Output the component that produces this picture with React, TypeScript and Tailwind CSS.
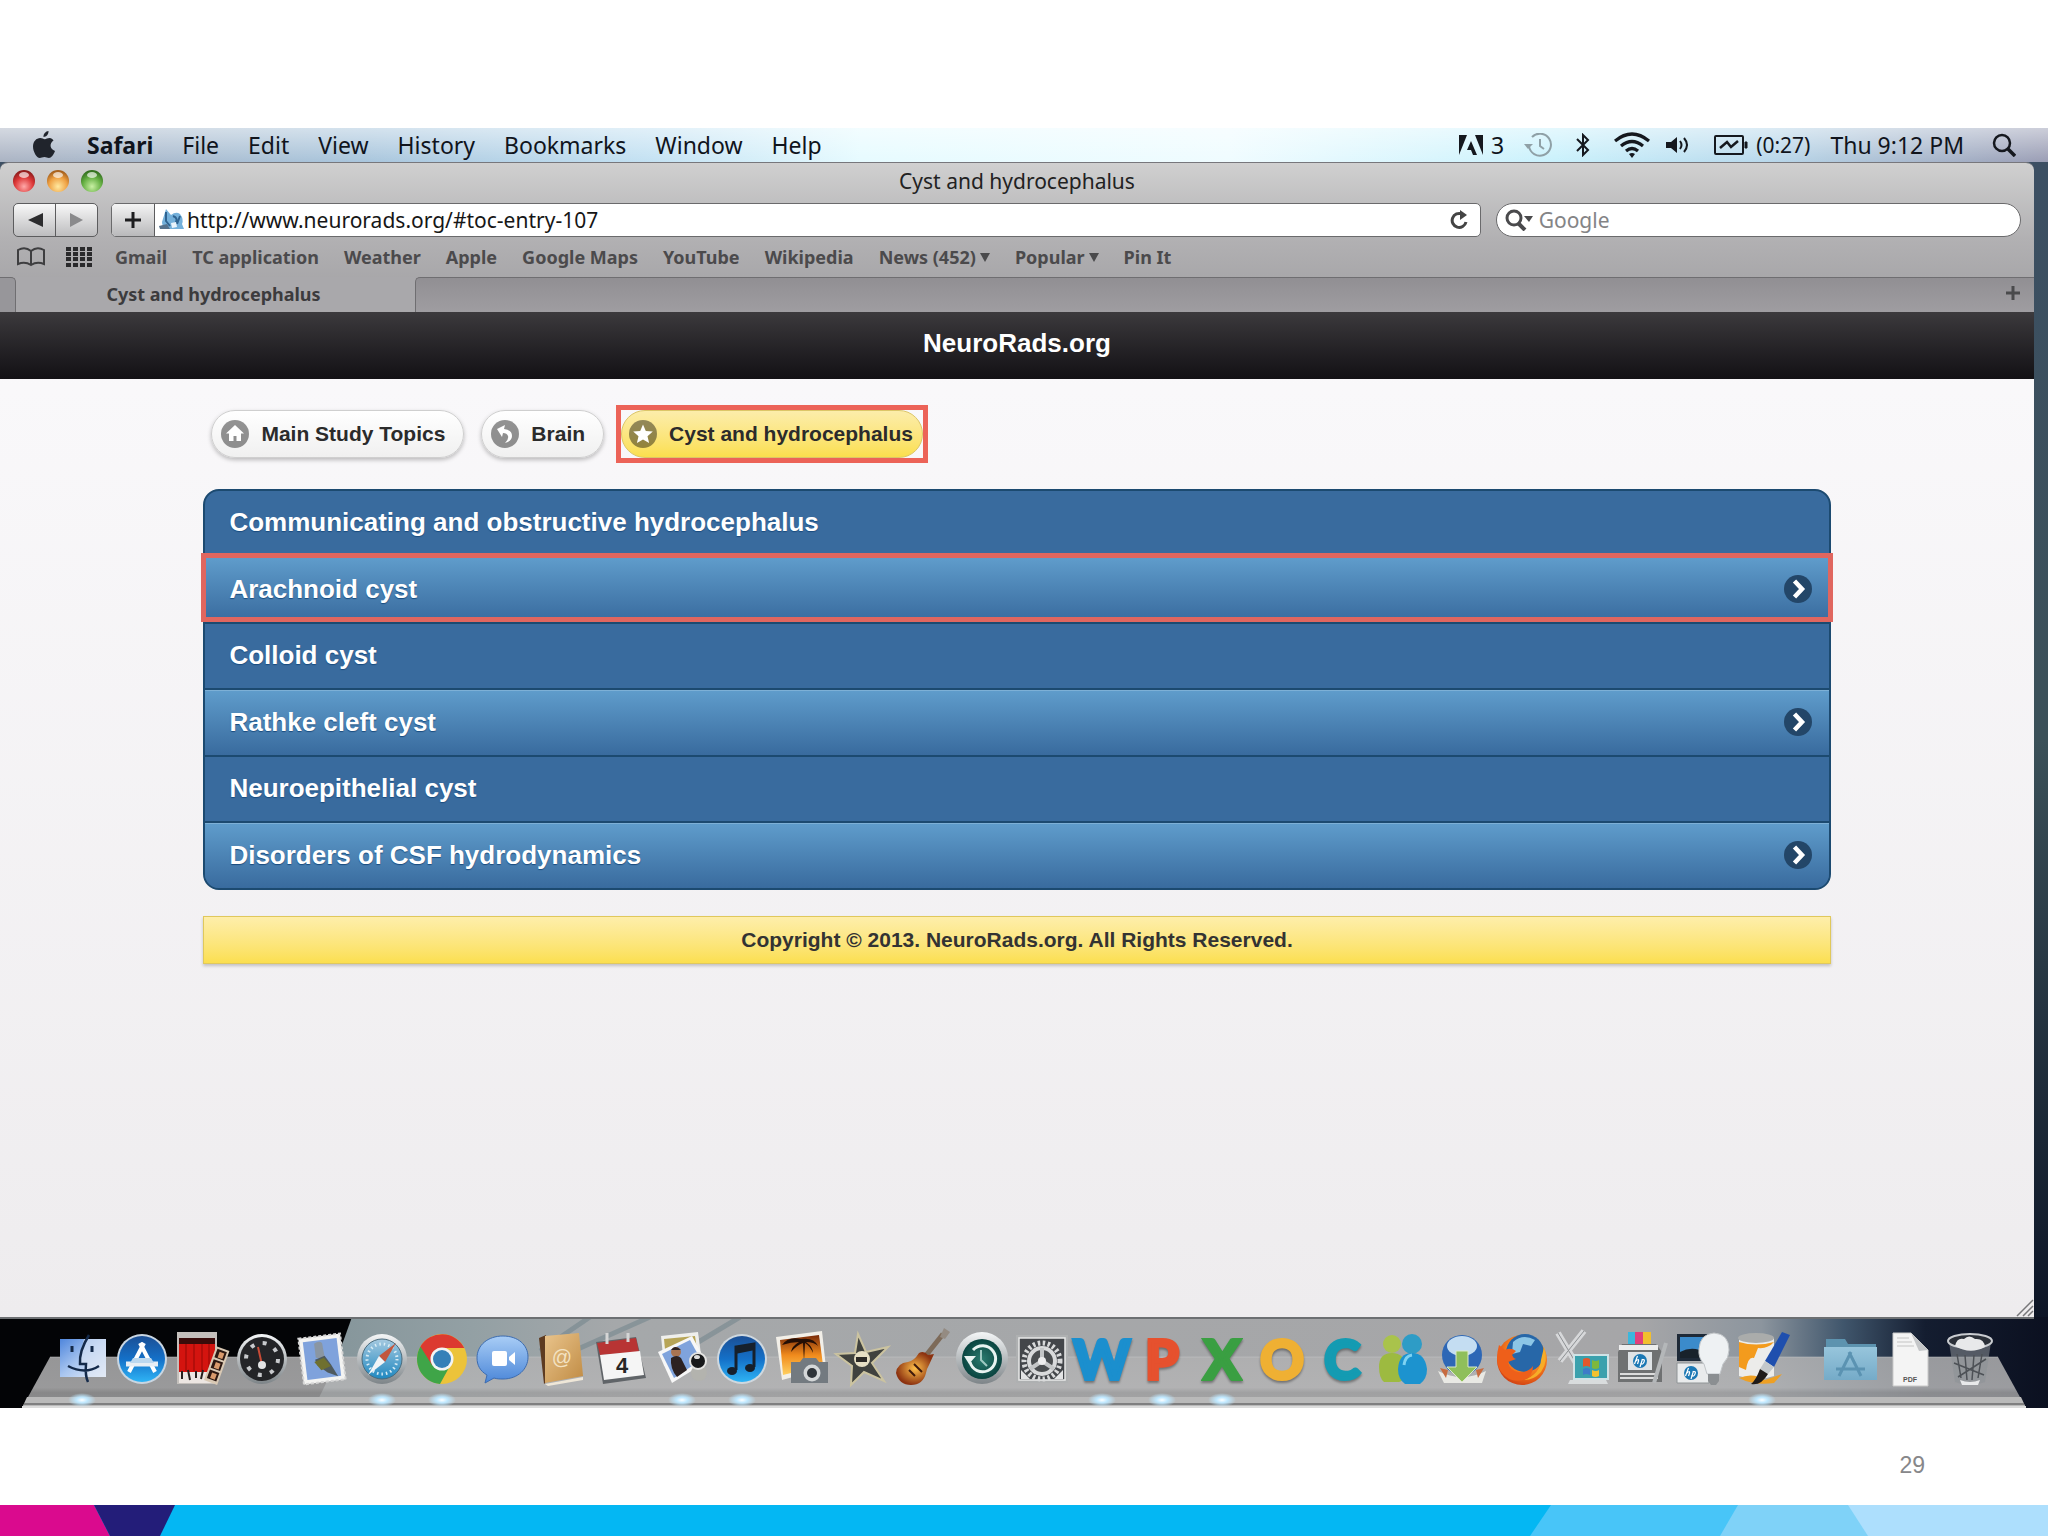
import type { ReactNode } from "react";

type DockItem = {
  name: string;
  running?: boolean;
  letter?: string;
  color?: string;
  art?: ReactNode;
};

const menus = ["File", "Edit", "View", "History", "Bookmarks", "Window", "Help"];

const bookmarks = [
  { label: "Gmail" },
  { label: "TC application" },
  { label: "Weather" },
  { label: "Apple" },
  { label: "Google Maps" },
  { label: "YouTube" },
  { label: "Wikipedia" },
  { label: "News (452)", menu: true },
  { label: "Popular", menu: true },
  { label: "Pin It" },
];

const topics = [
  { title: "Communicating and obstructive hydrocephalus" },
  { title: "Arachnoid cyst", link: true, marked: true },
  { title: "Colloid cyst" },
  { title: "Rathke cleft cyst", link: true },
  { title: "Neuroepithelial cyst" },
  { title: "Disorders of CSF hydrodynamics", link: true },
];

//Shared gradients
function Gradients() {
  return (
    <svg className="absolute h-0 w-0" aria-hidden="true">
      <defs>
        <linearGradient id="gFinder" x1="0" y1="0" x2="1" y2="1">
          <stop offset="0" stopColor="#4f86dc" />
          <stop offset=".5" stopColor="#a9c6f0" />
          <stop offset="1" stopColor="#e9eef6" />
        </linearGradient>
        <linearGradient id="gBlue" x1="0" y1="0" x2="0" y2="1">
          <stop offset="0" stopColor="#1b4f95" />
          <stop offset=".5" stopColor="#1470c8" />
          <stop offset="1" stopColor="#2fb4f5" />
        </linearGradient>
        <linearGradient id="gSilver" x1="0" y1="0" x2="0" y2="1">
          <stop offset="0" stopColor="#f4f6f7" />
          <stop offset="1" stopColor="#7d8488" />
        </linearGradient>
        <linearGradient id="gSky" x1="0" y1="0" x2="0" y2="1">
          <stop offset="0" stopColor="#a5c9e0" />
          <stop offset="1" stopColor="#1f88c0" />
        </linearGradient>
        <linearGradient id="gChat" x1="0" y1="0" x2="0" y2="1">
          <stop offset="0" stopColor="#a9cdf6" />
          <stop offset="1" stopColor="#4a86d8" />
        </linearGradient>
        <linearGradient id="gBook" x1="0" y1="0" x2="1" y2="1">
          <stop offset="0" stopColor="#e9c48c" />
          <stop offset="1" stopColor="#c08b43" />
        </linearGradient>
        <linearGradient id="gSunset" x1="0" y1="0" x2="0" y2="1">
          <stop offset="0" stopColor="#7a2a08" />
          <stop offset=".5" stopColor="#f08a1c" />
          <stop offset="1" stopColor="#ffd060" />
        </linearGradient>
        <radialGradient id="gGuitar">
          <stop offset="0" stopColor="#ffc04a" />
          <stop offset="1" stopColor="#8c3210" />
        </radialGradient>
        <radialGradient id="gTeal">
          <stop offset="0" stopColor="#2a7a6e" />
          <stop offset="1" stopColor="#0a4440" />
        </radialGradient>
        <linearGradient id="gFolder" x1="0" y1="0" x2="0" y2="1">
          <stop offset="0" stopColor="#97c5dc" />
          <stop offset="1" stopColor="#75abc8" />
        </linearGradient>
        <radialGradient id="gFox" cx=".6" cy=".35" r=".7">
          <stop offset="0" stopColor="#ffc93a" />
          <stop offset=".6" stopColor="#f47a1c" />
          <stop offset="1" stopColor="#cf3d12" />
        </radialGradient>
        <radialGradient id="gRed" cx=".5" cy=".75" r=".7">
          <stop offset="0" stopColor="#ffa9a9" />
          <stop offset=".6" stopColor="#dd3838" />
          <stop offset="1" stopColor="#8f1c1c" />
        </radialGradient>
        <radialGradient id="gAmber" cx=".5" cy=".75" r=".7">
          <stop offset="0" stopColor="#ffe9a0" />
          <stop offset=".6" stopColor="#efa143" />
          <stop offset="1" stopColor="#a7601c" />
        </radialGradient>
        <radialGradient id="gGreen" cx=".5" cy=".75" r=".7">
          <stop offset="0" stopColor="#c9f0a4" />
          <stop offset=".6" stopColor="#66b044" />
          <stop offset="1" stopColor="#33701f" />
        </radialGradient>
        <radialGradient id="gLamp">
          <stop offset="0" stopColor="#ffffff" />
          <stop offset=".4" stopColor="#bfe8ff" />
          <stop offset="1" stopColor="#bfe8ff" stopOpacity="0" />
        </radialGradient>
      </defs>
    </svg>
  );
}

const hp = (
  <>
    <circle r="7" fill="#1b78b4" />
    <path d="M-2.500 -5l-3 8M-4 0q3-3 2.500 0l-1 3M2.500 -2l-2.500 8M1.500 -1q4-1.500 2.500 2t-3.500 1" stroke="#fff" strokeWidth="1.200" fill="none" />
  </>
);

const dockItems: DockItem[] = [
  {
    name: "Finder",
    running: true,
    art: (
      <>
        <rect x="4" y="6" width="46" height="38" fill="url(#gFinder)" />
        <path d="M28 6h22v38H30l-1-13h-5q1-14 4-25z" fill="#dfe8f5" opacity=".6" />
        <path d="M33 2Q23 18 24 31h6q-1 12 2 18M12 33q17 9 31 0" fill="none" stroke="#142a4a" strokeWidth="2.500" />
        <path d="M16 13v6M36 13v6" stroke="#142a4a" strokeWidth="3" />
      </>
    ),
  },
  {
    name: "App Store",
    art: (
      <>
        <circle cx="26" cy="26" r="25" fill="#c9d6e2" />
        <circle cx="26" cy="26" r="23" fill="url(#gBlue)" />
        <path d="M28 10L13 39M24 10l15 29" stroke="#fff" strokeWidth="4" />
        <path d="M10 31h32" stroke="#e7eef5" strokeWidth="5" />
        <path d="M17 25h18l3 5H14z" fill="#bcd8ef" />
      </>
    ),
  },
  {
    name: "Photo Booth",
    art: (
      <>
        <path d="M1-1h40v52H1z" fill="#c4c0bc" />
        <path d="M3 5h36v34H3z" fill="#d4140f" />
        <path d="M3 5h36v6H3z" fill="#3a0c0a" />
        <path d="M10 11v27M18 11v27M26 11v27M33 11v27" stroke="#b40e0a" strokeWidth="2" />
        <path d="M3 39h36v11H3z" fill="#ece6e2" />
        <path d="M6 38v8M12 37l2 10M20 38v7M27 37l-2 9" stroke="#26201e" strokeWidth="2" />
        <g transform="rotate(20 42 32)">
          <path d="M34 15h14v36H34z" fill="#d9c9b4" />
          <path d="M36 17h10v9H36zM36 28h10v9H36zM36 39h10v9H36z" fill="#2c1812" />
          <path d="M39 19h5v6h-5zM39 30h5v6h-5zM39 41h5v6h-5z" fill="#d99a6c" />
        </g>
      </>
    ),
  },
  {
    name: "Dashboard",
    art: (
      <>
        <circle cx="26" cy="26" r="25" fill="url(#gSilver)" />
        <circle cx="26" cy="26" r="22" fill="#232427" />
        <circle cx="26" cy="26" r="16" fill="none" stroke="#c7c9cc" strokeWidth="4" strokeDasharray="4 8.600" />
        <path d="M26 32L22 14" stroke="#c84b36" strokeWidth="2" />
        <circle cx="26" cy="32" r="4" fill="#e3e4e5" />
      </>
    ),
  },
  {
    name: "Mail",
    art: (
      <g transform="rotate(-7 26 26)">
        <path d="M5 3h42v46H5z" fill="#f4f4f2" stroke="#d5d5d5" strokeDasharray="3 2" strokeWidth="2" />
        <path d="M9 7h34v38H9z" fill="#7fa2dc" />
        <path d="M20 10q5-3 8 0l1 16-9-2z" fill="#8a96a3" />
        <path d="M19 26l10-3 5 9 6 13-10-5-9-8z" fill="#4f5a5e" />
        <path d="M18 28l10-3 6 9-10 3z" fill="#6f7030" />
      </g>
    ),
  },
  {
    name: "Safari",
    running: true,
    art: (
      <>
        <circle cx="26" cy="26" r="25" fill="url(#gSilver)" />
        <circle cx="26" cy="26" r="20" fill="url(#gSky)" stroke="#4a6b7c" />
        <circle cx="26" cy="26" r="15" fill="none" stroke="#d8ecf5" strokeWidth="3" strokeDasharray="1.500 3" />
        <path d="M40 10L29 29l-6-6z" fill="#c2573e" />
        <path d="M12 42l11-19 6 6z" fill="#f0f4f6" />
      </>
    ),
  },
  {
    name: "Chrome",
    running: true,
    art: (
      <>
        <circle cx="26" cy="26" r="25" fill="#ecc33a" />
        <path d="M26 26L4.400 13.500A25 25 0 0 0 24 51l11-20z" fill="#3fa548" />
        <path d="M26 26V15h22.300A25 25 0 0 0 4.400 13.500L16 32z" fill="#dc3a30" />
        <circle cx="26" cy="26" r="11.500" fill="#f3f4f4" />
        <circle cx="26" cy="26" r="9" fill="#3580b8" />
      </>
    ),
  },
  {
    name: "iChat",
    art: (
      <>
        <path d="M27 3c15 0 25 9 25 21s-10 22-25 22c-3 0-6 0-9-1l-9 5 2-8C4 38 1 32 1 25 1 12 12 3 27 3z" fill="url(#gChat)" stroke="#3d6cb0" />
        <rect x="16" y="18" width="15" height="15" rx="2" fill="#fff" />
        <path d="M33 24l6-5v13l-6-5z" fill="#fff" />
      </>
    ),
  },
  {
    name: "Address Book",
    art: (
      <>
        <path d="M3 5l7-3 4 44-6 5z" fill="#5e3b20" />
        <path d="M9 3l34-3 4 43-38 7z" fill="url(#gBook)" />
        <path d="M9 51l38-7v3L12 53z" fill="#efe7d8" />
        <text x="26" y="31" textAnchor="middle" fontSize="20" fill="#f3e2c2" fontFamily="Liberation Sans">@</text>
      </>
    ),
  },
  {
    name: "iCal",
    art: (
      <>
        <path d="M0 9l40-5 10 41-43 6z" fill="#606468" />
        <path d="M1 10l39-5 3 14-39 3z" fill="#b83434" />
        <path d="M4 22l40-4 4 24-40 5z" fill="#f5f5f5" />
        <path d="M11 0v11M32 0v9" stroke="#d5d5d5" strokeWidth="3" />
        <text x="26" y="40" textAnchor="middle" fontSize="22" fontWeight="700" fill="#262626" fontFamily="Liberation Sans">4</text>
      </>
    ),
  },
  {
    name: "Preview",
    running: true,
    art: (
      <>
        <path d="M5 3l37-4 4 30-38 4z" fill="#efefec" />
        <path d="M8 6l31-3 3 20-32 4z" fill="#b7a557" />
        <path d="M2 19L36 3l14 26-34 21z" fill="#f7f7f7" />
        <path d="M6 21L34 7l11 20-27 18z" fill="#7fa3dc" />
        <circle cx="20" cy="19" r="5" fill="#a87452" />
        <path d="M15 17q4-6 10 0zM15 25q6-4 10 0l6 12-10 7q-7-8-6-19z" fill="#2c2222" />
        <circle cx="43" cy="40" r="8" fill="#b3b3ae" />
        <circle cx="42" cy="28" r="9" fill="#e4e4e2" />
        <circle cx="42" cy="28" r="7" fill="#17181a" />
        <ellipse cx="41" cy="24" rx="3" ry="2" fill="#dcdcdc" />
      </>
    ),
  },
  {
    name: "iTunes",
    running: true,
    art: (
      <>
        <circle cx="26" cy="26" r="25" fill="#cfd8df" />
        <circle cx="26" cy="26" r="23" fill="url(#gBlue)" />
        <path d="M20 37V14l18-3v23" fill="none" stroke="#16202c" strokeWidth="3" />
        <path d="M19 14l20-4v7l-20 4z" fill="#16202c" />
        <ellipse cx="16" cy="38" rx="5" ry="4" fill="#16202c" />
        <ellipse cx="34" cy="35" rx="5" ry="4" fill="#16202c" />
      </>
    ),
  },
  {
    name: "iPhoto",
    art: (
      <>
        <path d="M0 4l46-6 4 37-44 12z" fill="#f2efe8" />
        <path d="M4 7l39-5 4 30-40 10z" fill="url(#gSunset)" />
        <path d="M25 6q-13-3-19 6 9-3 17-3-7 4-8 10 6-7 12-9l1 18 1-18q5 3 8 10 0-6-7-11 8 0 12 4-4-9-17-7z" fill="#240e05" />
        <path d="M15 29h9l3-4h13l3 4h9v21H15z" fill="#737a80" />
        <circle cx="36" cy="40" r="8.500" fill="#d4d7d8" />
        <circle cx="36" cy="40" r="5" fill="#2e3338" />
      </>
    ),
  },
  {
    name: "iMovie",
    art: (
      <>
        <path d="M22 1l8 18 22-5-16 16 12 18-20-9-13 13 1-19L0 21l19-1z" fill="#40423e" stroke="#cbc3a0" strokeWidth="2" />
        <circle cx="26" cy="26" r="8" fill="#e6dfc4" />
        <path d="M20 24h11v5H20z" fill="#2c2a26" />
      </>
    ),
  },
  {
    name: "GarageBand",
    art: (
      <>
        <path d="M24 30L47 1" stroke="#7d6a58" strokeWidth="5" />
        <path d="M44 4l4-9 6 4-5 7z" fill="#948b82" />
        <path d="M23 20q5-3 9 2l6-1-5 11q-2 3-3 8-3 12-15 12T0 40q1-10 12-11 6-1 11-9z" fill="url(#gGuitar)" />
        <path d="M18 31l8 8M13 37l6 6" stroke="#3f1a0b" strokeWidth="2" />
      </>
    ),
  },
  {
    name: "Time Machine",
    art: (
      <>
        <circle cx="26" cy="25" r="26" fill="url(#gSilver)" />
        <circle cx="26" cy="26" r="20" fill="url(#gTeal)" />
        <path d="M14 29a13 13 0 1 0 3-12" fill="none" stroke="#e8f3f1" strokeWidth="3" />
        <path d="M8 23l12 0-7 8z" fill="#e8f3f1" />
        <path d="M25 17v10l6 6" fill="none" stroke="#9fc9c2" strokeWidth="2" />
      </>
    ),
  },
  {
    name: "System Preferences",
    art: (
      <>
        <path d="M0 2h52v48H0z" fill="#aeb0b1" />
        <path d="M3 5h46v42H3z" fill="#43464a" stroke="#e8e8e8" strokeWidth="1.500" />
        <circle cx="26" cy="28" r="18" fill="none" stroke="#d9dadb" strokeWidth="5" strokeDasharray="2.500 2.500" />
        <circle cx="26" cy="28" r="13" fill="#4b4e50" stroke="#d9dadb" strokeWidth="4" />
        <path d="M26 28V15M26 28l-12 8M26 28l12 8" stroke="#c4c6c7" strokeWidth="4" />
        <circle cx="26" cy="28" r="4" fill="#ededed" />
        <path d="M5 37l9 9H5zM47 37l-9 9h9z" fill="#e3e4e5" />
      </>
    ),
  },
  { name: "Word", running: true, letter: "W", color: "text-[#1b8fce] [-webkit-text-stroke:4px_#1b8fce]" },
  { name: "PowerPoint", running: true, letter: "P", color: "text-[#e6512e] [-webkit-text-stroke:4px_#e6512e]" },
  { name: "Excel", running: true, letter: "X", color: "text-[#3a9f42] [-webkit-text-stroke:4px_#3a9f42]" },
  { name: "Outlook", letter: "O", color: "text-[#efb033] [-webkit-text-stroke:4px_#efb033]" },
  { name: "Communicator", letter: "C", color: "text-[#149bb2] [-webkit-text-stroke:4px_#149bb2]" },
  {
    name: "Messenger",
    art: (
      <>
        <circle cx="16" cy="11" r="9" fill="#a9c34b" />
        <path d="M3 34q0-14 13-14t13 14-6 15H8q-5-4-5-15z" fill="#9dba40" />
        <circle cx="36" cy="11" r="10" fill="#2e9cc6" />
        <path d="M22 36q1-16 14-16t15 16q0 10-7 15H29q-7-5-7-15z" fill="#1c93cf" />
        <path d="M28 32q1-9 8-10" stroke="#7fd3f2" strokeWidth="3" fill="none" />
      </>
    ),
  },
  {
    name: "Download Manager",
    art: (
      <>
        <circle cx="26" cy="22" r="20" fill="#2d67b6" />
        <ellipse cx="26" cy="13" rx="15" ry="10" fill="#c4ddf2" />
        <path d="M2 38q24 12 48 0l-4 12H8z" fill="#e9e9e4" />
        <path d="M40 37l8-2-6 10zM12 37l-8-2 6 10z" fill="#c76b3f" />
        <path d="M20 18h12v16h9L26 49 11 34h9z" fill="#8fbf5a" stroke="#dceac8" />
      </>
    ),
  },
  {
    name: "Firefox",
    art: (
      <>
        <circle cx="26" cy="27" r="25" fill="url(#gFox)" />
        <circle cx="29" cy="20" r="19" fill="#2767a8" />
        <path d="M17 9q10-9 22-2l-4 6-8-2-3 8-8 2z" fill="#8cc6e6" />
        <path d="M48 14q5 14-3 25-7 8-17 8 16-6 17-20z" fill="#f6ad28" />
        <path d="M3 12l6 5q6-3 11 1l-4 4q1 3 4 4l-8 3q1 8 10 10 10 1 15-6 0 11-10 14-13 3-21-7T3 12z" fill="#ee5f1a" />
      </>
    ),
  },
  {
    name: "Remote Desktop",
    art: (
      <>
        <path d="M2 0l18 30M28-2L4 28" stroke="#d7d8da" strokeWidth="6" />
        <path d="M2 0l18 30M28-2L4 28" stroke="#8d9093" strokeWidth="1" />
        <path d="M18 22h34v24H18z" fill="#3aa1ad" stroke="#cfe3e6" strokeWidth="2" />
        <path d="M14 47h36l2 4H12z" fill="#d9dcdd" />
        <path d="M27 26q4-2 7 0v8q-4-2-7 0z" fill="#e4572c" />
        <path d="M36 27q4 2 7 0v8q-4 2-7 0z" fill="#7eb83c" />
        <path d="M27 36q4-2 7 0v6q-4-2-7 0z" fill="#3d7cc9" />
        <path d="M36 37q4 2 7 0v6q-4 2-7 0z" fill="#f2c230" />
      </>
    ),
  },
  {
    name: "HP Utility",
    art: (
      <>
        <path d="M12-1h7v13h-7z" fill="#3cb6dc" />
        <path d="M19-1h8v13h-8z" fill="#e0407c" />
        <path d="M27-1h8v13h-8z" fill="#f2bf2e" />
        <path d="M6 11h34l6 8v30H2V19z" fill="#6f7172" />
        <path d="M3 12h39v5H3z" fill="#eceded" />
        <path d="M12 19h24v18H12z" fill="#dfe3e6" />
        <path d="M4 41h38M4 45h38" stroke="#dcdcdc" strokeWidth="2" />
        <g transform="translate(24 28)">{hp}</g>
        <path d="M50 10L38 50" stroke="#b4b7b9" strokeWidth="4" />
      </>
    ),
  },
  {
    name: "HP Device Manager",
    art: (
      <>
        <path d="M1 1h32v27H1z" fill="#1e2a38" />
        <path d="M4 4h26v21H4z" fill="#3b8bcb" />
        <path d="M4 25v-6q13-7 26 1v5z" fill="#18222b" />
        <path d="M1 30h32v20H1z" fill="#e9ebec" stroke="#8f9496" />
        <g transform="translate(15 40)">{hp}</g>
        <path d="M38 0q15 1 15 17 0 8-6 14l-3 10H31l-3-10q-6-6-5-15Q24 1 38 0z" fill="#eef1f3" stroke="#c1c5c8" />
        <path d="M32 41h11v7l-3 4h-5l-3-4z" fill="#8b8f92" />
      </>
    ),
  },
  {
    name: "Paint",
    running: true,
    art: (
      <>
        <path d="M3 5h35v38q-17 6-35 0z" fill="#ececea" />
        <ellipse cx="20" cy="5" rx="18" ry="5" fill="#aaacab" />
        <path d="M3 9q17 5 35 0-6 7-16 6l-4 10q-6-2-8 12l-7-3z" fill="#f39b1d" />
        <path d="M3 45q14-6 26 2l17-6-8 9q-20 3-35-5z" fill="#eea024" />
        <path d="M46-1l8 3-16 32-9-6z" fill="#1f4fae" />
        <path d="M29 28l9 6-6 7-8-5z" fill="#c3c8cb" />
        <path d="M24 36l8 5q-7 12-17 10 5-4 9-15z" fill="#1f1b1a" />
      </>
    ),
  },
];

const dockShelf: DockItem[] = [
  {
    name: "Applications",
    art: (
      <>
        <path d="M2 6h19l3 5h28v36H2z" fill="#5d93af" />
        <path d="M0 14h53v33H0z" fill="url(#gFolder)" />
        <path d="M27 19L15 43M25 19l12 24M12 36h29" stroke="#5b93b2" strokeWidth="3" fill="none" />
      </>
    ),
  },
  {
    name: "Documents",
    art: (
      <>
        <path d="M9 0h18l17 17v36H9z" fill="#f4f4f4" stroke="#c9c9c9" />
        <path d="M27 0l17 17-9 1z" fill="#c4c6c8" />
        <path d="M13 5h12M13 9h15M13 13h17" stroke="#d3d3d3" strokeWidth="1.500" />
        <text x="26" y="49" textAnchor="middle" fontSize="7" fontWeight="700" fill="#555" fontFamily="Liberation Sans">PDF</text>
      </>
    ),
  },
  {
    name: "Trash",
    art: (
      <>
        <path d="M5 9l6 40q15 6 30 0l6-40z" fill="#8d9196" opacity=".55" />
        <path d="M13 21l4 24M21 22l2 25M30 22l-2 25M38 21l-4 24M10 30l30 12M42 26L14 44" stroke="#4d5156" strokeWidth="1.500" />
        <ellipse cx="26" cy="8" rx="22" ry="7" fill="#2b3038" stroke="#c9ccd0" strokeWidth="2" />
        <path d="M11 13q2-9 9-7 5-5 11 0 9-1 10 8-15 8-30-1z" fill="#e8e9ea" />
        <path d="M16 47q10 4 20 0l-2 5H18z" fill="#e8e9ea" />
      </>
    ),
  },
];

function DockIcon({ item }: { item: DockItem }) {
  return (
    <button type="button" aria-label={item.name} className="flex w-15 shrink-0 flex-col items-center">
      {item.letter ? (
        <span className={`flex h-[52px] items-center font-['Lato','Liberation_Sans',sans-serif] text-[54px] leading-[52px] font-bold drop-shadow-[0_2px_1px_rgba(0,0,0,0.35)] ${item.color}`}>
          {item.letter}
        </span>
      ) : (
        <svg viewBox="0 0 52 52" className="h-[52px] w-[52px] overflow-visible">
          {item.art}
        </svg>
      )}
      {item.running && (
        <svg viewBox="0 0 28 14" className="mt-2 h-[14px] w-7">
          <ellipse cx="14" cy="7" rx="14" ry="7" fill="url(#gLamp)" />
        </svg>
      )}
    </button>
  );
}

function Dock() {
  return (
    <nav aria-label="Dock" className="relative h-[91px]">
      <svg viewBox="0 0 2048 91" preserveAspectRatio="none" className="absolute inset-0 h-full w-full" aria-hidden="true">
        <defs>
          <linearGradient id="desk">
            <stop offset=".17" stopColor="#87979c" />
            <stop offset=".23" stopColor="#93a0a4" />
            <stop offset=".3" stopColor="#a5a8aa" />
            <stop offset=".8" stopColor="#a6a6a8" />
            <stop offset=".86" stopColor="#8c959e" />
            <stop offset=".9" stopColor="#40566c" />
            <stop offset=".94" stopColor="#141d30" />
            <stop offset="1" stopColor="#0b1020" />
          </linearGradient>
          <linearGradient id="shelf" x1="0" y1="0" x2="0" y2="1">
            <stop offset="0" stopColor="#b0b0b1" />
            <stop offset=".6" stopColor="#b4b4b5" />
            <stop offset=".7" stopColor="#9f9fa0" />
            <stop offset="1" stopColor="#a6a6a6" />
          </linearGradient>
        </defs>
        <path d="M0 0h2048v91H0z" fill="url(#desk)" />
        <path d="M0 0h352l-18 50-20 41H0z" fill="#030406" />
        <path d="M590 0l-50 34M650 0l-90 40M740 0l-60 36" stroke="#6d8189" strokeWidth="5" opacity=".5" />
        <path d="M50 40h1948l28 51H22z" fill="url(#shelf)" opacity=".85" />
        <path d="M50 40h1948" stroke="#c6c8c9" opacity=".5" />
        <path d="M27 80h1994l5 11H22z" fill="#b9b9b9" />
        <path d="M24 87h2000" stroke="#7f7f80" strokeWidth="2" />
        <path d="M22 90h2004" stroke="#dcdcdc" strokeWidth="2" />
        <path d="M0 1h2034" stroke="#6c6f72" strokeWidth="2" />
      </svg>
      <div className="relative flex justify-center pt-4 pl-1">
        {dockItems.map((item) => (
          <DockIcon key={item.name} item={item} />
        ))}
        <span className="w-7 shrink-0" />
        {dockShelf.map((item) => (
          <DockIcon key={item.name} item={item} />
        ))}
      </div>
    </nav>
  );
}

function MenuBar() {
  return (
    <header className="flex h-[34px] items-center bg-[linear-gradient(to_right,#aab3c3,#a9c6dd_18%,#c4e2f3_32%,#e6fbff_42%,#effcff_60%,#c9f1fc_76%,#b9d9ec_86%,#9a9db4)] text-[23px] leading-[34px] text-[#10141c]">
      <div className="flex h-full w-full items-center justify-between bg-linear-to-b from-white/50 to-transparent pr-8 pl-8">
        <nav className="flex items-center gap-[29px]">
          <button type="button" aria-label="Apple menu">
            <svg viewBox="0 0 24 28" className="h-7 w-6" fill="#20242c">
              <path d="M16.500 0c.3 3-2.200 6-5 6-.3-3 2.300-5.800 5-6zM21.500 9.600c-4.600 3-3.500 8.800 1.500 10.400-1.500 4-3.800 7-6 7-1.800 0-2.600-1-4.600-1s-3 1-4.600 1C4.600 27 1 20.500 1 15.500S4.400 7 8.200 7c2 0 3.300 1.200 4.600 1.200S15.500 7 17.700 7c1.400 0 3 .9 3.800 2.600z" />
            </svg>
          </button>
          <button type="button" className="pl-[2px] font-bold">Safari</button>
          {menus.map((menu) => (
            <button type="button" key={menu}>{menu}</button>
          ))}
        </nav>
        <div className="flex items-center">
          <svg viewBox="0 0 24 20" className="h-5 w-6" fill="#15181e">
            <path d="M0 0h8L0 20zM16 0h8v20zM12 6l6 14h-4l-2-5H8z" />
          </svg>
          <span className="ml-2">3</span>
          <svg viewBox="0 0 28 24" className="ml-5 h-6 w-7" fill="none" stroke="#8fa0a6" strokeWidth="2">
            <path d="M5 13a11 11 0 1 0 3-9" />
            <path d="M0 11l4 5 5-5z" fill="#8fa0a6" stroke="none" />
            <path d="M16 6v7l4 3" />
          </svg>
          <svg viewBox="0 0 14 24" className="ml-6 h-6 w-[14px]" fill="none" stroke="#15181e" strokeWidth="2">
            <path d="M1 6l11 11-5 5V2l5 5L1 18" />
          </svg>
          <svg viewBox="0 0 36 26" className="ml-6 h-[26px] w-9" fill="none" stroke="#15181e" strokeWidth="3.200">
            <path d="M1 9q17-14 34 0M7 14q11-9 22 0M12 19q6-5 12 0" />
            <path d="M15 22q3-2 6 0l-3 4z" fill="#15181e" stroke="none" />
          </svg>
          <svg viewBox="0 0 24 20" className="ml-4 h-5 w-6" fill="none" stroke="#15181e" strokeWidth="2">
            <path d="M0 7h5l6-5v16l-6-5H0z" fill="#15181e" stroke="none" />
            <path d="M14 6q3 4 0 8M18 3q6 7 0 14" />
          </svg>
          <svg viewBox="0 0 34 20" className="ml-6 h-5 w-[34px]" fill="none" stroke="#15181e" strokeWidth="2">
            <rect x="1" y="1" width="28" height="18" rx="1" />
            <path d="M31 7h2v6h-2z" fill="#15181e" strokeWidth="1" />
            <path d="M6 13l7-6 4 5 7-6" strokeWidth="2.500" />
          </svg>
          <span className="ml-2 text-[21px]">(0:27)</span>
          <span className="ml-5">Thu 9:12 PM</span>
          <button type="button" aria-label="Spotlight" className="ml-7">
            <svg viewBox="0 0 24 24" className="h-6 w-6" fill="none" stroke="#15181e" strokeWidth="2.500">
              <circle cx="10" cy="10" r="8" />
              <path d="M16 16l7 7" strokeWidth="3.500" />
            </svg>
          </button>
        </div>
      </div>
    </header>
  );
}

function Light({ fill, label }: { fill: string; label: string }) {
  return (
    <button type="button" aria-label={label}>
      <svg viewBox="0 0 24 24" className="h-6 w-6">
        <circle cx="12" cy="12" r="11" fill={fill} />
        <ellipse cx="12" cy="6" rx="5" ry="3" fill="#fff" opacity=".65" />
      </svg>
    </button>
  );
}

function BrowserChrome() {
  return (
    <div className="bg-linear-to-b from-[#d0d0d0] via-[#b2b1b3] to-[#a09fa2]">
      <div className="grid h-10 grid-cols-3 items-center px-3 pb-1">
        <div className="flex gap-[10px]">
          <Light fill="url(#gRed)" label="Close" />
          <Light fill="url(#gAmber)" label="Minimize" />
          <Light fill="url(#gGreen)" label="Zoom" />
        </div>
        <h1 className="text-center text-[21px] leading-6 text-[#222]">Cyst and hydrocephalus</h1>
      </div>

      <div className="flex h-[34px] px-[13px]">
        <div className="flex w-[85px] divide-x divide-[#5c5c5e] overflow-hidden rounded-[5px] border border-[#5c5c5e] bg-linear-to-b from-[#f8f8f8] to-[#bdbdbf]">
          <button type="button" aria-label="Back" className="flex flex-1 items-center justify-center">
            <svg viewBox="0 0 16 14" className="h-[14px] w-4"><path d="M16 0v14L1 7z" fill="#2c2c2e" /></svg>
          </button>
          <button type="button" aria-label="Forward" className="flex flex-1 items-center justify-center">
            <svg viewBox="0 0 16 14" className="h-[14px] w-4"><path d="M1 0v14l13-7z" fill="#8a8a8c" /></svg>
          </button>
        </div>
        <div className="ml-[13px] flex min-w-0 flex-[138] overflow-hidden rounded-[5px] border border-[#6a6a6c] bg-white">
          <button type="button" aria-label="Add bookmark" className="flex w-[43px] items-center justify-center border-r border-[#5c5c5e] bg-linear-to-b from-[#f4f4f4] to-[#b9b9bb]">
            <svg viewBox="0 0 18 18" className="h-[18px] w-[18px]" stroke="#1d1d1f" strokeWidth="3"><path d="M9 1v16M1 9h16" /></svg>
          </button>
          <label className="flex flex-1 items-center pl-1">
            <svg viewBox="0 0 26 22" className="h-[22px] w-[26px]">
              <path d="M3 13L7 0l5 6q5-4 9-1 4 5 2 10l2 5H7q-4-2-4-7z" fill="#74b0da" />
              <path d="M7 3v9l4 5M14 7q6 2 2 8M21 7l-3 8" stroke="#2f6390" strokeWidth="2" fill="none" />
              <path d="M0 17l8-2 3 5H1z" fill="#55718c" />
              <path d="M12 14l5-1 1 5-5 1z" fill="#eaf4fb" />
            </svg>
            <input
              aria-label="Address"
              defaultValue="http://www.neurorads.org/#toc-entry-107"
              className="ml-[2px] min-w-0 flex-1 bg-transparent text-[21px] leading-8 text-[#161616] outline-none"
            />
          </label>
          <button type="button" aria-label="Reload" className="flex w-10 items-center justify-center">
            <svg viewBox="0 0 20 20" className="h-5 w-5" fill="none" stroke="#444" strokeWidth="3">
              <path d="M16 12a7 7 0 1 1-4-8" />
              <path d="M10 0l7 5-7 5z" fill="#444" stroke="none" />
            </svg>
          </button>
        </div>
        <label className="ml-[15px] flex min-w-0 flex-[52] items-center rounded-full border border-[#6a6a6c] bg-white pl-2">
          <svg viewBox="0 0 30 22" className="h-[22px] w-[30px]" fill="none" stroke="#4a4a4c" strokeWidth="3">
            <circle cx="9" cy="9" r="7" />
            <path d="M13 14l7 7" strokeWidth="4" />
            <path d="M19 7h9l-4 6z" fill="#4a4a4c" stroke="none" />
          </svg>
          <input
            aria-label="Search"
            placeholder="Google"
            className="ml-1 min-w-0 flex-1 bg-transparent text-[21px] leading-8 outline-none placeholder:text-[#848486]"
          />
        </label>
      </div>

      <div className="flex h-10 items-center pl-4 text-[18px] leading-6 font-bold text-[#4b4a4c]">
        <button type="button" aria-label="Show all bookmarks">
          <svg viewBox="0 0 30 20" className="h-5 w-[30px]" fill="none" stroke="#3e3e40" strokeWidth="2">
            <path d="M15 4Q9-1 2 3v14q7-3 13 1 6-4 13-1V3q-7-4-13 1z" />
            <path d="M15 4v14" />
          </svg>
        </button>
        <button type="button" aria-label="Top sites" className="ml-5">
          <svg viewBox="0 0 26 20" className="h-5 w-[26px]" fill="none" stroke="#2a2a2c" strokeWidth="4" strokeDasharray="5 2">
            <path d="M0 2h26M0 7h26M0 12h26M0 18h26" />
          </svg>
        </button>
        <div className="ml-[23px] flex gap-[25px]">
          {bookmarks.map(({ label, menu }) => (
            <a key={label} href="#" className="flex items-center">
              {label}
              {menu && (
                <svg viewBox="0 0 10 9" className="ml-1 h-[9px] w-[10px]"><path d="M0 0h10L5 9z" fill="#4a4a4c" /></svg>
              )}
            </a>
          ))}
        </div>
      </div>

      <div className="flex h-[35px] text-[18px] leading-8 font-bold text-[#3c3b3d]">
        <div className="w-4 rounded-tr-[5px] border-t border-r border-[#6f6e71] bg-[#97969a]" />
        <button type="button" className="w-[399px] bg-[#a9a8ab] pr-1 pb-[2px]">Cyst and hydrocephalus</button>
        <div className="flex flex-1 items-center justify-end rounded-tl-[5px] border-t border-l border-[#6f6e71] bg-linear-to-b from-[#918f93] to-[#9f9da1] pr-[14px] pb-1">
          <button type="button" aria-label="New tab">
            <svg viewBox="0 0 14 14" className="h-[14px] w-[14px]" stroke="#4a4a4c" strokeWidth="3"><path d="M7 0v14M0 7h14" /></svg>
          </button>
        </div>
      </div>
    </div>
  );
}

function Badge({ children }: { children: ReactNode }) {
  return (
    <svg viewBox="0 0 28 28" className="h-7 w-7 shrink-0">
      <circle cx="14" cy="14" r="14" fill="#000" opacity=".42" />
      {children}
    </svg>
  );
}

function Crumbs() {
  return (
    <nav className="flex items-center pt-[26px] pl-2 text-[21px] leading-6 font-bold text-[#2b2b2b]">
      <a href="#" className="flex h-12 items-center gap-3 rounded-full border border-[#cfcfcf] bg-linear-to-b from-white to-[#f0f0f0] pr-[18px] pl-[9px] shadow-[0_2px_4px_rgba(0,0,0,0.25)]">
        <Badge>
          <path d="M14 5l9 8.500h-3V21h-4.500v-5h-3v5H8v-7.500H5z" fill="#fff" />
        </Badge>
        Main Study Topics
      </a>
      <a href="#" className="ml-[17px] flex h-12 items-center gap-3 rounded-full border border-[#cfcfcf] bg-linear-to-b from-white to-[#f0f0f0] pr-[18px] pl-[9px] shadow-[0_2px_4px_rgba(0,0,0,0.25)]">
        <Badge>
          <path d="M6 9l8-4-1 4q8 1 8 7 0 5-7 7 4-4 3-7-1-3-5-3l-1 4z" fill="#fff" />
        </Badge>
        Brain
      </a>
      <div className="ml-3 border-[5px] border-[#ec6358]">
        <a href="#" className="flex h-12 items-center gap-3 rounded-full border border-[#dcc668] bg-linear-to-b from-[#fcedaa] to-[#fbdf4c] pr-[9px] pl-[7px]">
          <Badge>
            <path d="M14 4.500l2.800 6.500 7 .6-5.300 4.600 1.600 6.800-6.100-3.600L7.900 23l1.600-6.800-5.300-4.600 7-.6z" fill="#fff" />
          </Badge>
          Cyst and hydrocephalus
        </a>
      </div>
    </nav>
  );
}

function TopicList() {
  return (
    <ul className="mt-[26px] rounded-[16px] border-2 border-[#1c4a70] bg-[#396b9e] text-[26px] leading-8 font-bold text-white [text-shadow:0_1px_1px_#194b7e]">
      {topics.map(({ title, link, marked }, i) => (
        <li key={title} className={`relative ${i > 0 ? "border-t-2 border-[#1c4a70]" : ""}`}>
          {link ? (
            <a
              href="#"
              className={`flex h-[65px] items-center justify-between border-t border-[#7db0d6] bg-linear-to-b from-[#5f9ccb] to-[#396b9e] pr-[17px] pb-[2px] pl-6 ${i === topics.length - 1 ? "rounded-b-[14px]" : ""}`}
            >
              {title}
              <svg viewBox="0 0 28 28" className="h-7 w-7">
                <circle cx="14" cy="14" r="14" fill="#234668" />
                <path d="M10.500 6l7.500 8-7.500 8" fill="none" stroke="#fff" strokeWidth="4.500" />
              </svg>
            </a>
          ) : (
            <div className="flex h-16 items-center pb-[2px] pl-6">{title}</div>
          )}
          {marked && <span className="pointer-events-none absolute -inset-x-1 -top-1 bottom-0 border-[5px] border-[#e0665f]" />}
        </li>
      ))}
    </ul>
  );
}

function Page() {
  return (
    <main className="relative flex-1 bg-linear-to-b from-[#faf9fb] to-[#eeecee] font-['Liberation_Sans',Arial,sans-serif]">
      <h2 className="flex h-[67px] items-center justify-center bg-linear-to-b from-[#3c3a3d] to-[#131115] pb-[6px] text-[26px] leading-8 font-bold text-white">
        NeuroRads.org
      </h2>
      <div className="px-[10%]">
        <Crumbs />
        <TopicList />
        <footer className="mt-[26px] border border-[#e0c85c] bg-linear-to-b from-[#feeeaa] to-[#fbdf4f] text-center text-[21px] leading-[46px] font-bold text-[#333] shadow-[0_2px_3px_rgba(0,0,0,0.2)]">
          Copyright © 2013. NeuroRads.org. All Rights Reserved.
        </footer>
      </div>
      <svg viewBox="0 0 18 18" className="absolute right-0 bottom-0 h-[18px] w-[18px]" stroke="#77777a" strokeWidth="1.500">
        <path d="M1 17L17 1M7 17L17 7M12 17l5-5" />
      </svg>
    </main>
  );
}

function SlideFooter() {
  return (
    <div>
      <p className="px-[6%] pt-[45px] pb-[28px] text-right font-['Liberation_Sans',Arial,sans-serif] text-[23px] leading-6 text-[#87878a]">29</p>
      <svg viewBox="0 0 2048 31" preserveAspectRatio="none" className="block h-[31px] w-full" aria-hidden="true">
        <path d="M0 0h2048v31H0z" fill="#04b7f3" />
        <path d="M0 0h94l16 31H0z" fill="#da0a8e" />
        <path d="M94 0h81l-15 31h-50z" fill="#231d79" />
        <path d="M1551 0h497v31H1530z" fill="#48c5f8" />
        <path d="M1738 0h310v31H1720z" fill="#7fd2f8" />
        <path d="M1848 0h200v31h-180z" fill="#addffd" />
      </svg>
    </div>
  );
}

export default function App() {
  return (
    <div className="flex min-h-screen flex-col bg-white pt-32 font-['Noto_Sans','Open_Sans',sans-serif]">
      <Gradients />
      <MenuBar />
      <div className="flex flex-1 flex-col bg-linear-to-b from-[#3c4f63] via-[#3b5058] to-[#0d1526] pr-[14px]">
        <div className="flex flex-1 flex-col overflow-hidden rounded-t-lg border-t border-[#77777c]">
          <BrowserChrome />
          <Page />
        </div>
      </div>
      <Dock />
      <SlideFooter />
    </div>
  );
}
